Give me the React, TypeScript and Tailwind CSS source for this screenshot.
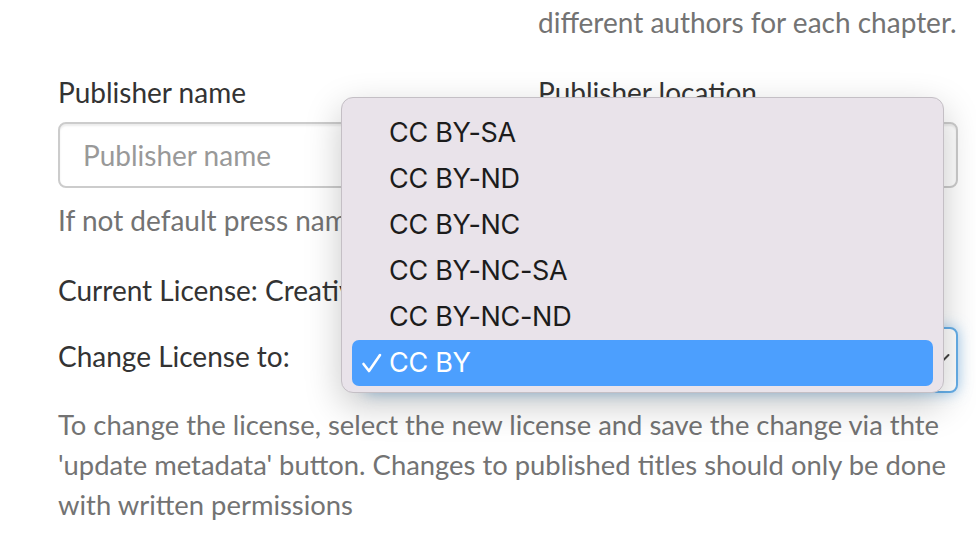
import React from 'react';

const options = ['CC BY-SA', 'CC BY-ND', 'CC BY-NC', 'CC BY-NC-SA', 'CC BY-NC-ND', 'CC BY'];

function Check() {
  return (
    <svg width="22" height="20" viewBox="0 0 22 20" fill="none">
      <path d="M2.5 11 L8 18 L19 2" stroke="white" strokeWidth="2.6" strokeLinecap="round" strokeLinejoin="round" />
    </svg>
  );
}

function LicenseMenu() {
  return (
    <div className="absolute left-[341px] top-[97px] w-[603px] h-[296px] rounded-[12px] border border-[#c4bfc5] bg-[#e9e3ea] shadow-[0_12px_36px_rgba(0,0,0,0.22)] px-[10px] pt-[12px] font-['Inter',sans-serif] text-[27px] text-[#1c1c1c]">
      {options.map((opt) => {
        const selected = opt === 'CC BY';
        return (
          <div
            key={opt}
            className={
              selected
                ? 'h-[46px] flex items-center rounded-[7px] bg-[#4c9ffe] text-white'
                : 'h-[46px] flex items-center'
            }
          >
            <span className="w-[37px] pl-[9px] flex items-center">{selected ? <Check /> : null}</span>
            <span className="tracking-[-0.3px]">{opt}</span>
          </div>
        );
      })}
    </div>
  );
}

export default function App() {
  return (
    <div className="relative w-[976px] h-[558px] overflow-hidden bg-white font-['Lato',sans-serif] text-[28px] leading-[40px]">
      <div className="w-[900px] ml-[58px] pt-[2px]">
        {/* tail of the previous row */}
        <div className="grid grid-cols-2 gap-x-[60px]">
          <div />
          <p className="text-[#737373] whitespace-nowrap">different authors for each chapter.</p>
        </div>

        {/* Publisher row */}
        <div className="grid grid-cols-2 gap-x-[60px] mt-[30px]">
          <div>
            <label className="block text-[#333]">Publisher name</label>
            <input
              placeholder="Publisher name"
              className="mt-[10px] w-full h-[66px] px-[23px] rounded-[8px] border-2 border-[#ccc] text-[28px] text-[#555] placeholder:text-[#999] shadow-[inset_0_2px_2px_rgba(0,0,0,0.075)] outline-none"
            />
            <p className="mt-[12px] text-[#737373] whitespace-nowrap">If not default press name, enter the publisher here</p>
          </div>
          <div>
            <label className="block text-[#333]">Publisher location</label>
            <input className="mt-[10px] w-full h-[66px] px-[23px] rounded-[8px] border-2 border-[#ccc] shadow-[inset_0_2px_2px_rgba(0,0,0,0.075)] outline-none" />
          </div>
        </div>

        {/* License */}
        <p className="mt-[30px] text-[#333] whitespace-nowrap">Current License: Creative Commons Attribution</p>

        <div className="flex items-start mt-[17px]">
          <label className="w-[306px] shrink-0 pt-[9px] text-[#333]">Change License to:</label>
          <div className="relative flex-1 h-[66px] rounded-[8px] border-2 border-[#66afe9] bg-white shadow-[0_0_14px_rgba(102,175,233,0.6)]">
            <svg className="absolute right-[6px] top-[23px]" width="16" height="12" viewBox="0 0 16 12" fill="none">
              <path d="M1.5 3 L8 9.5 L14.5 3" stroke="#444" strokeWidth="2" strokeLinecap="round" strokeLinejoin="round" />
            </svg>
          </div>
        </div>

        <p className="mt-[12px] w-[910px] text-[27.4px] text-[#737373] whitespace-nowrap">
          To change the license, select the new license and save the change via thte
          <br />
          'update metadata' button. Changes to published titles should only be done
          <br />
          with written permissions
        </p>
      </div>

      <LicenseMenu />
    </div>
  );
}
